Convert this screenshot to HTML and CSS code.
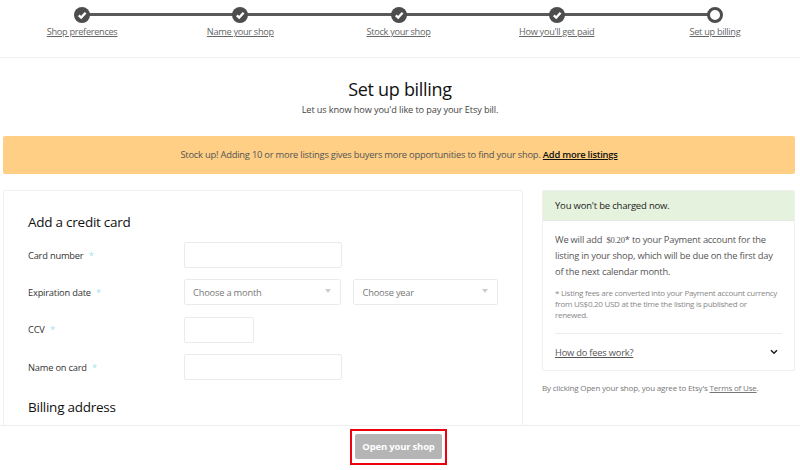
FILE: index.html
```html
<!DOCTYPE html>
<html lang="en">
<head>
<meta charset="UTF-8">
<meta name="viewport" content="width=device-width, initial-scale=1.0">
<title>Set up billing</title>
<link rel="stylesheet" href="styles.css">
</head>
<body>
    <div class="page">
        <div class="scroll">
            <div class="stepper">
                <div class="step">
                    <span class="dot"><svg viewBox="0 0 16 16" width="16" height="16"><path d="M4.8 8.4l2.4 2.2 4.4-4.8" fill="none" stroke="#fff" stroke-width="2.4"/></svg></span>
                    <a href="#">Shop preferences</a>
                </div>
                <div class="step">
                    <span class="dot"><svg viewBox="0 0 16 16" width="16" height="16"><path d="M4.8 8.4l2.4 2.2 4.4-4.8" fill="none" stroke="#fff" stroke-width="2.4"/></svg></span>
                    <a href="#">Name your shop</a>
                </div>
                <div class="step">
                    <span class="dot"><svg viewBox="0 0 16 16" width="16" height="16"><path d="M4.8 8.4l2.4 2.2 4.4-4.8" fill="none" stroke="#fff" stroke-width="2.4"/></svg></span>
                    <a href="#">Stock your shop</a>
                </div>
                <div class="step">
                    <span class="dot"><svg viewBox="0 0 16 16" width="16" height="16"><path d="M4.8 8.4l2.4 2.2 4.4-4.8" fill="none" stroke="#fff" stroke-width="2.4"/></svg></span>
                    <a href="#">How you'll get paid</a>
                </div>
                <div class="step last">
                    <span class="dot current"></span>
                    <a href="#">Set up billing</a>
                </div>
            </div>

            <div class="heading">
                <h1>Set up billing</h1>
                <p>Let us know how you'd like to pay your Etsy bill.</p>
            </div>

            <div class="banner">
                Stock up! Adding 10 or more listings gives buyers more opportunities to find your shop. <a href="#">Add more listings</a>
            </div>

            <div class="columns">
                <div class="form-card">
                    <h2>Add a credit card</h2>
                    <div class="row">
                        <label>Card number <span class="req">*</span></label>
                        <input type="text" class="wide">
                    </div>
                    <div class="row">
                        <label>Expiration date <span class="req">*</span></label>
                        <div class="select wide">Choose a month<span class="arrow"></span></div>
                        <div class="select year">Choose year<span class="arrow"></span></div>
                    </div>
                    <div class="row">
                        <label>CCV <span class="req">*</span></label>
                        <input type="text" class="short">
                    </div>
                    <div class="row">
                        <label>Name on card <span class="req">*</span></label>
                        <input type="text" class="wide">
                    </div>
                    <h2 class="second">Billing address</h2>
                </div>

                <div class="side">
                    <div class="fee-card">
                        <div class="fee-top">You won't be charged now.</div>
                        <div class="fee-body">
                            <p class="fee-text">We will add <span class="price">$0.20</span>* to your Payment account for the listing in your shop, which will be due on the first day of the next calendar month.</p>
                            <p class="fee-note">* Listing fees are converted into your Payment account currency from US$0.20 USD at the time the listing is published or<br>renewed.</p>
                            <div class="fee-link">
                                <a href="#">How do fees work?</a>
                                <svg viewBox="0 0 8 6" width="8" height="6"><path d="M1 1.2l3 3 3-3" fill="none" stroke="#222" stroke-width="1.6"/></svg>
                            </div>
                        </div>
                    </div>
                    <p class="terms">By clicking Open your shop, you agree to Etsy's <a href="#">Terms of Use</a>.</p>
                </div>
            </div>
        </div>

        <div class="footer">
            <div class="highlight">
                <button>Open your shop</button>
            </div>
        </div>
    </div>
</body>
</html>
```

FILE: styles.css
```css
body {
    margin: 0;
    padding: 0;
    font-family: "Open Sans", "Noto Sans", sans-serif;
    color: #444;
    background: #fff;
}
.page {
    height: 470px;
    display: flex;
    flex-direction: column;
    overflow: hidden;
}
.scroll {
    height: 425px;
    overflow: hidden;
    flex: none;
}
a {
    color: inherit;
}

/* stepper */
.stepper {
    display: flex;
    padding: 7px 6px 0 3px;
    height: 50px;
    border-bottom: 1px solid #f0f0f0;
}
.step {
    flex: 1;
    display: flex;
    flex-direction: column;
    align-items: center;
    position: relative;
    font-size: 9.2px;
    letter-spacing: -0.3px;
    color: #666;
}
.step::after {
    content: "";
    position: absolute;
    top: 6px;
    left: 50%;
    width: 100%;
    height: 3px;
    background: #595959;
}
.step.last::after {
    display: none;
}
.step a {
    margin-top: 2px;
    line-height: 14px;
}
.dot {
    width: 16px;
    height: 16px;
    border-radius: 50%;
    background: #4d4d4d;
    position: relative;
    z-index: 1;
    display: block;
}
.dot svg {
    display: block;
}
.dot.current {
    box-sizing: border-box;
    background: #fff;
    border: 3px solid #4d4d4d;
}

/* heading */
.heading {
    text-align: center;
    padding-top: 19px;
    height: 59px;
}
h1 {
    margin: 0;
    font-size: 18px;
    line-height: 24px;
    font-weight: 400;
    letter-spacing: -0.3px;
    color: #111;
}
.heading p {
    margin: 2px 0 0;
    font-size: 9.2px;
    line-height: 14px;
    letter-spacing: -0.12px;
    color: #444;
}

/* banner */
.banner {
    margin: 0 5px 0 3px;
    height: 38px;
    line-height: 38px;
    background: #fecf85;
    border-radius: 2px;
    text-align: center;
    font-size: 9.4px;
    letter-spacing: -0.23px;
    color: #555;
}
.banner a {
    color: #111;
    font-weight: 600;
}

/* columns */
.columns {
    display: flex;
    align-items: flex-start;
    margin: 16px 5px 0 3px;
    gap: 19px;
}
.form-card {
    width: 520px;
    height: 260px;
    box-sizing: border-box;
    border: 1px solid #f0f0f0;
    border-radius: 2px;
    padding: 22px 24px 0;
}
h2 {
    margin: 0 0 11px;
    font-size: 13.5px;
    line-height: 18px;
    font-weight: 400;
    letter-spacing: -0.25px;
    color: #111;
}
h2.second {
    margin-top: 18px;
}
.row {
    display: flex;
    align-items: center;
    height: 26px;
    margin-bottom: 11.4px;
}
label {
    width: 156px;
    flex: none;
    font-size: 9.3px;
    letter-spacing: -0.2px;
    color: #333;
}
.req {
    color: #a5dff5;
    margin-left: 3px;
}
input, .select {
    box-sizing: border-box;
    height: 26px;
    border: 1px solid #ebebeb;
    border-radius: 2px;
    background: #fff;
    font-family: inherit;
}
.wide {
    width: 158px;
}
.short {
    width: 70px;
}
.select {
    position: relative;
    padding-left: 8px;
    line-height: 25px;
    font-size: 9.3px;
    letter-spacing: -0.2px;
    color: #777;
}
.year {
    width: 145px;
    margin-left: 12px;
}
.arrow {
    position: absolute;
    right: 9px;
    top: 9px;
    border-left: 3px solid transparent;
    border-right: 3px solid transparent;
    border-top: 4px solid #ccc;
}

/* right side */
.side {
    width: 253px;
    flex: none;
}
.fee-card {
    border: 1px solid #f0f0f0;
    border-radius: 2px;
}
.fee-top {
    background: #e5f2dd;
    height: 29px;
    line-height: 29px;
    padding-left: 12px;
    font-size: 9.5px;
    letter-spacing: -0.2px;
    color: #222;
    border-bottom: 1px solid #e6e6e6;
}
.fee-body {
    padding: 11px 12px 0;
}
.fee-text {
    margin: 0;
    font-size: 9.3px;
    line-height: 16px;
    letter-spacing: -0.2px;
    color: #555;
}
.price {
    font-family: "Liberation Serif", serif;
    font-size: 8.6px;
    margin: 0 0 0 2px;
}
.fee-note {
    margin: 7px 0 0;
    font-size: 8px;
    line-height: 11px;
    letter-spacing: -0.27px;
    color: #888;
}
.fee-link {
    margin-top: 13px;
    height: 36px;
    border-top: 1px solid #ececec;
    display: flex;
    justify-content: space-between;
    align-items: center;
    padding-right: 4px;
    font-size: 9.3px;
    letter-spacing: -0.2px;
    color: #555;
}
.terms {
    margin: 11px 0 0;
    font-size: 8px;
    line-height: 12px;
    letter-spacing: -0.18px;
    color: #777;
}

/* footer */
.footer {
    flex: 1;
    border-top: 1px solid #eee;
    display: flex;
    justify-content: center;
    padding-top: 3px;
    padding-right: 3px;
}
.highlight {
    box-sizing: border-box;
    height: 36px;
    border: 2px solid #ed0010;
    padding: 3px;
}
button {
    display: block;
    width: 87px;
    height: 25px;
    border: none;
    border-radius: 2px;
    padding: 0;
    background: #b5b5b5;
    color: #fff;
    font-family: inherit;
    font-size: 9.5px;
    letter-spacing: -0.2px;
    font-weight: 700;
}
```
